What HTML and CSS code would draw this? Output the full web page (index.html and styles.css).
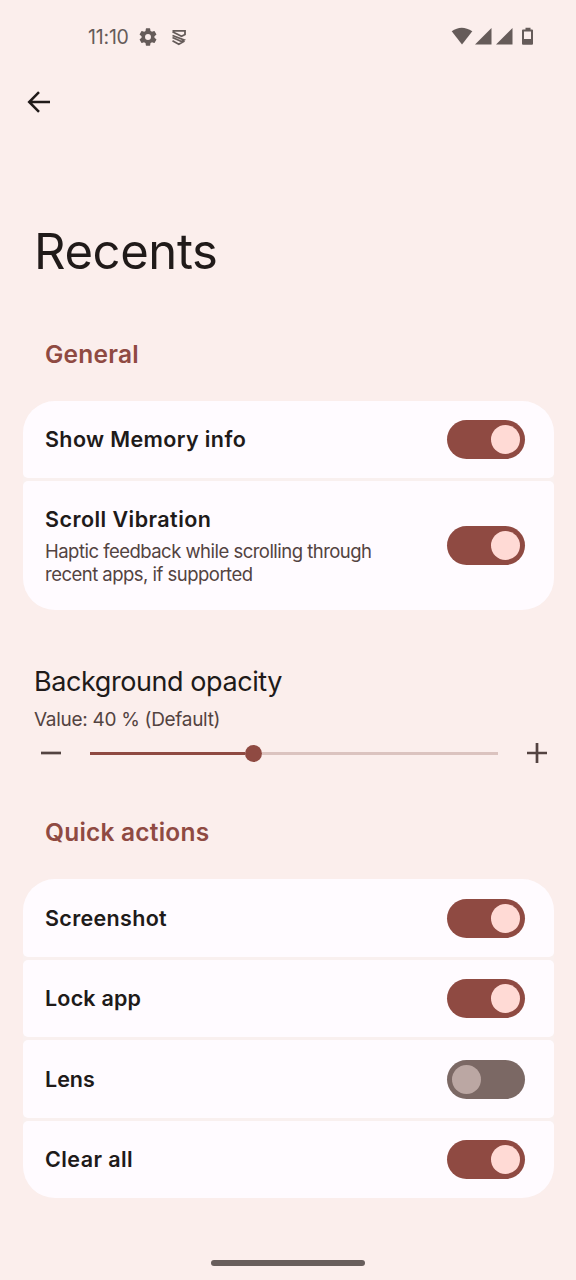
FILE: index.html
```html
<!DOCTYPE html>
<html lang="en">
<head>
<meta charset="utf-8">
<title>Recents</title>
<link rel="stylesheet" href="styles.css">
</head>
<body>
<div class="screen">
  <div class="status">
    <span class="clock">11:10</span>
    <svg class="gear" viewBox="2 2 20 20"><path fill-rule="evenodd" d="M19.14 12.94c.04-.3.06-.61.06-.94s-.02-.64-.07-.94l2.03-1.58a.5.5 0 0 0 .12-.61l-1.92-3.32a.5.5 0 0 0-.59-.22l-2.39.96a7 7 0 0 0-1.62-.94L14.4 2.81a.48.48 0 0 0-.48-.41h-3.84a.47.47 0 0 0-.47.41l-.36 2.54c-.59.24-1.13.57-1.62.94l-2.39-.96a.48.48 0 0 0-.59.22L2.74 8.87a.47.47 0 0 0 .12.61l2.03 1.58a6 6 0 0 0 0 1.88l-2.03 1.58a.5.5 0 0 0-.12.61l1.92 3.32c.12.22.37.29.59.22l2.39-.96c.5.38 1.03.7 1.62.94l.36 2.54c.05.24.24.41.48.41h3.84c.24 0 .44-.17.47-.41l.36-2.54a7 7 0 0 0 1.62-.94l2.39.96c.22.08.47 0 .59-.22l1.92-3.32a.47.47 0 0 0-.12-.61zM12 15.3a3.3 3.3 0 1 1 0-6.6 3.3 3.3 0 0 1 0 6.6z"/></svg>
    <svg class="layers" viewBox="0 0 16 17"><path d="M1.500 2.800L10.500 7.300L14 5.500V1.800H1.500M1.500 6.500L13 11L10.500 12.500L1.500 8.500M1.500 11.800L7.800 15.300L13.500 12"/></svg>
    <span class="spacer"></span>
    <svg class="signals" viewBox="0 0 84 20"><path d="M.7 4.3Q10.5-3 21.3 4.3L11 17.5Z"/><path d="M40.5 1V17.5H24Z"/><path d="M61.5 1V17.5H45Z"/><path fill-rule="evenodd" d="M74.5 .8H79.500V2.500H81Q82 2.500 82 3.500V16.800Q82 17.800 81 17.800H72Q71 17.800 71 16.800V3.500Q71 2.500 72 2.500H74.500ZM73 4.500V12H80V4.500Z"/></svg>
  </div>
  <div class="toolbar">
    <svg class="back" viewBox="0 0 24 24"><path d="M23 12H2.500M12 2.200L2.200 12L12 21.800"/></svg>
  </div>
  <h1 class="title">Recents</h1>

  <h2 class="section general">General</h2>
  <div class="group">
    <div class="row"><span class="label memory">Show Memory info</span><span class="switch on"></span></div>
    <div class="row tall">
      <div class="copy"><div class="label vibration">Scroll Vibration</div><div class="summary">Haptic feedback while scrolling through<br>recent apps, if supported</div></div>
      <span class="switch on"></span>
    </div>
  </div>

  <div class="opacity">
    <div class="opacity-title">Background opacity</div>
    <div class="opacity-value">Value: 40 % (Default)</div>
    <div class="slider">
      <svg class="step" viewBox="0 0 22 22"><path d="M1 11H21"/></svg>
      <div class="track"><span class="fill"></span><span class="knob"></span><span class="rest"></span></div>
      <svg class="step" viewBox="0 0 22 22"><path d="M1 11H21M11 1V21"/></svg>
    </div>
  </div>

  <h2 class="section quick">Quick actions</h2>
  <div class="group">
    <div class="row"><span class="label shot">Screenshot</span><span class="switch on"></span></div>
    <div class="row"><span class="label lock">Lock app</span><span class="switch on"></span></div>
    <div class="row"><span class="label lens">Lens</span><span class="switch"></span></div>
    <div class="row"><span class="label clear">Clear all</span><span class="switch on"></span></div>
  </div>
  <div class="home"></div>
</div>
</body>
</html>
```
FILE: styles.css
```css
* { box-sizing: border-box; }
body { margin: 0; background: #fbeeec; }
.screen {
  width: 576px; height: 1280px; overflow: hidden;
  display: flex; flex-direction: column;
  font-family: Inter, "Open Sans", sans-serif;
  color: #201a19;
  padding: 0 22.500px 0 23px;
}
.status { height: 74px; display: flex; align-items: center; padding: 0 18.500px 0 65px; flex: none; color: #655b59; }
.status svg { fill: #655b59; }
.clock { font-size: 19.5px; letter-spacing: -.2px; width: 51px; white-space: nowrap; }
.gear { width: 18px; height: 18px; }
.status .layers { width: 16px; height: 17px; margin-left: 14px; fill: none; stroke: #655b59; stroke-width: 1.800; }
.spacer { flex: 1; }
.signals { width: 84px; height: 20px; }
.toolbar { height: 56px; display: flex; align-items: center; padding-left: 4px; flex: none; }
.back { width: 24px; height: 24px; fill: none; stroke: #201a19; stroke-width: 2.500; }
h1, h2 { margin: 0; }
.title { margin: 92px 0 0 11px; font-size: 49px; line-height: 60px; font-weight: 400; letter-spacing: -.4px; flex: none; }
.section { margin-left: 22px; font-size: 24.500px; line-height: 30px; font-weight: 600; letter-spacing: .22px; color: #8f4a42; flex: none; }
.general { margin-top: 57px; }
.quick { margin-top: 53px; }
.group { margin-top: 32px; display: flex; flex-direction: column; gap: 3px; background: #f9f0ef; border-radius: 32px; flex: none; }
.row { height: 77.450px; background: #fffbff; border-radius: 5px; display: flex; align-items: center; justify-content: space-between; padding: 0 28.600px 0 22px; }
.row:first-child { border-top-left-radius: 32px; border-top-right-radius: 32px; }
.row:last-child { border-bottom-left-radius: 32px; border-bottom-right-radius: 32px; }
.tall { height: 129px; }
.label { font-size: 21.500px; line-height: 28px; font-weight: 600; white-space: nowrap; margin-top: -1px; }
.memory { letter-spacing: .38px; }
.vibration { letter-spacing: .45px; }
.shot { letter-spacing: .32px; }
.lock { letter-spacing: .2px; }
.clear { letter-spacing: .42px; }
.summary { margin-top: 7px; font-size: 18.500px; line-height: 23px; letter-spacing: -.52px; color: #534341; white-space: nowrap; }
.switch { width: 78px; height: 39px; border-radius: 20px; background: #7b6864; display: flex; align-items: center; padding: 0 5px; flex: none; }
.switch::before { content: ""; width: 29px; height: 29px; border-radius: 50%; background: #bba7a3; }
.switch.on { background: #8f4a42; justify-content: flex-end; }
.switch.on::before { background: #ffdad5; }
.opacity { margin: 54px 0 0 11px; flex: none; }
.opacity-title { font-size: 27px; line-height: 36px; letter-spacing: -.42px; white-space: nowrap; }
.opacity-value { margin-top: 8px; font-size: 19px; line-height: 24px; letter-spacing: -.3px; color: #534341; white-space: nowrap; }
.slider { height: 22px; margin-top: 10px; display: flex; align-items: center; justify-content: space-between; padding: 0 6px 0 5.500px; }
.step { width: 22px; height: 22px; stroke: #534341; stroke-width: 2.700; fill: none; }
.track { width: 408px; display: flex; align-items: center; }
.fill { width: 155px; height: 3px; background: #8f4a42; }
.knob { width: 17px; height: 17px; border-radius: 50%; background: #8f4a42; }
.rest { flex: 1; height: 3px; background: #dbc3bf; }
.home { width: 154px; height: 6px; margin: 62px auto 0; border-radius: 3px; background: #685e5c; flex: none; }
```
